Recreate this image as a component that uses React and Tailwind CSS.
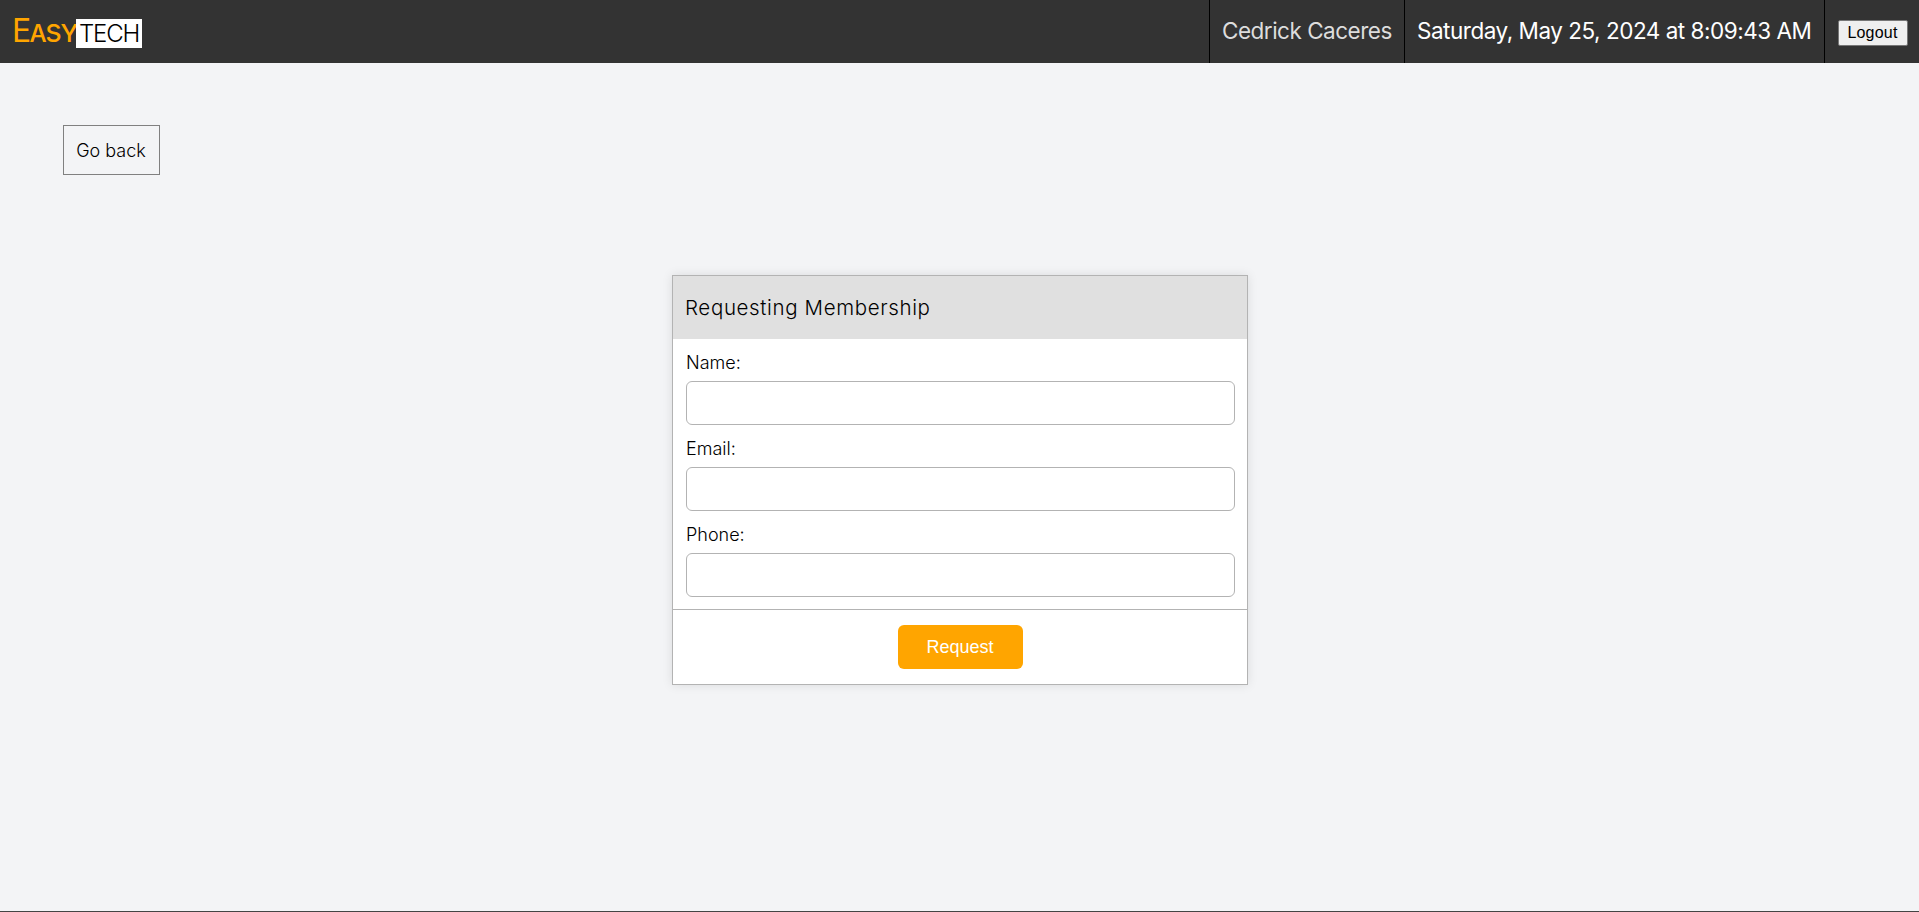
const FIELDS = ["Name", "Email", "Phone"];

function Header() {
  return (
    <header className="flex h-[63px] items-stretch justify-between bg-[#333333]">
      <div className="flex items-center pl-3 pb-px">
        <div className="flex items-baseline">
          <span className="w-16 text-[32px] leading-none font-[380] tracking-[-1.7px] whitespace-nowrap text-[orange] [font-variant:small-caps]">Easy</span>
          <span className="w-[66px] bg-white pl-[3px] text-[24px] leading-[29px] font-light tracking-[-1.2px] text-black">TECH</span>
        </div>
      </div>
      <div className="flex items-stretch text-[22.5px] font-normal">
        <div className="flex w-[195px] items-center border-l border-black pb-0.5 pl-3 tracking-[-0.5px] whitespace-nowrap text-[#dddddd]">Cedrick Caceres</div>
        <div className="flex w-[420px] items-center border-l border-black pb-0.5 pl-3 tracking-[-0.48px] whitespace-nowrap text-white">
          Saturday, May 25, 2024 at 8:09:43 AM
        </div>
        <div className="flex w-[95px] items-center border-l border-black pt-[3px] pl-[13px]">
          <button className="h-[26px] w-[70px] rounded-[2px] border border-[#767676] bg-[#efefef] pr-px font-['Liberation_Sans',sans-serif] text-[16px] leading-none font-normal tracking-[0.2px] text-black">
            Logout
          </button>
        </div>
      </div>
    </header>
  );
}

function Field({ label }) {
  return (
    <label className="flex flex-col text-[18px]">
      <span className="flex h-[42px] items-center pt-[5px]">{label}:</span>
      <input className="h-11 w-full rounded-md border border-[#b3b3b3] bg-white px-3 outline-none" />
    </label>
  );
}

export default function App() {
  return (
    <div className="flex h-screen flex-col border-b border-[#444444] bg-[#f3f4f6] font-['Inter',sans-serif] font-light text-black">
      <Header />
      <main className="flex flex-col px-[63px] pt-[62px]">
        <button className="h-[50px] w-[97px] border border-[#808080] pr-px text-[18px]">Go back</button>
        <form className="mt-[100px] ml-[609px] w-[576px] border border-[#b3b3b3] bg-white shadow-[0_0_10px_rgba(0,0,0,0.1)]">
          <h1 className="flex h-[63px] items-center bg-[#e0e0e0] pt-0.5 pl-3 text-[20.5px] tracking-[0.64px]">Requesting Membership</h1>
          <div className="pr-3 pb-3 pl-[13px]">
            {FIELDS.map((label) => (
              <Field key={label} label={label} />
            ))}
          </div>
          <div className="flex h-[75px] justify-center border-t border-[#b3b3b3] pt-[15px]">
            <button type="button" className="h-11 w-[125px] rounded-md bg-[orange] font-['Liberation_Sans',sans-serif] text-[18px] font-normal text-white">
              Request
            </button>
          </div>
        </form>
      </main>
    </div>
  );
}
